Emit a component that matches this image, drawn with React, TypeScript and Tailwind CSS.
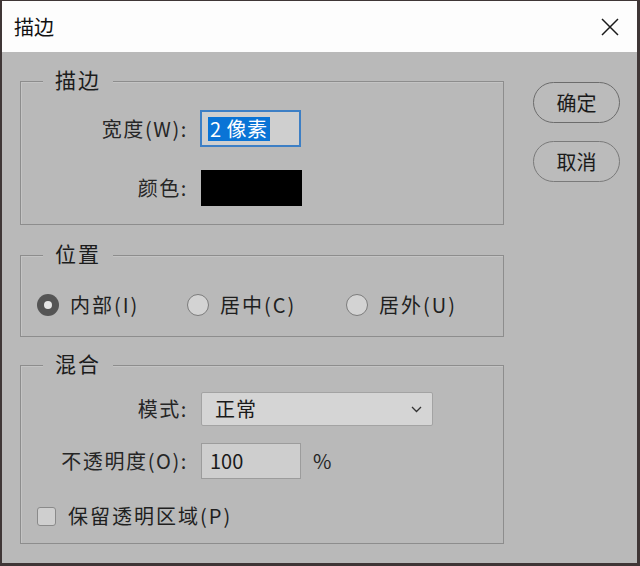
import React from "react";

function Group({ title, className, children }: { title: string; className: string; children: React.ReactNode }) {
  return (
    <div className={`relative border border-[#8d8d8d] shadow-[inset_1px_1px_0_#c4c4c4] ${className}`}>
      <span className="absolute left-[22px] -top-[17px] px-[12px] bg-[#b9b9b9] text-[21px] leading-[28px] tracking-[2px] text-[#1c1c1c]">
        {title}
      </span>
      {children}
    </div>
  );
}

function Radio({ checked, label, className }: { checked?: boolean; label: string; className: string }) {
  return (
    <div className={`flex items-center ${className}`}>
      {checked ? (
        <span className="w-[22px] h-[22px] rounded-full bg-[#555555] flex items-center justify-center">
          <span className="w-[8px] h-[8px] rounded-full bg-[#e6e6e6]" />
        </span>
      ) : (
        <span className="w-[22px] h-[22px] rounded-full border border-[#7c7c7c] bg-[#d3d3d3]" />
      )}
      <span className="ml-[11px] text-[20px] leading-[24px] tracking-[2px]">{label}</span>
    </div>
  );
}

export default function App() {
  return (
    <div className="w-[640px] h-[566px] flex flex-col border-t border-l-2 border-r-[3px] border-b-[3px] border-[#3f3636] bg-[#b9b9b9] font-['Noto_Sans_CJK_SC',sans-serif] text-[#1f1f1f]">
      <div className="h-[51px] shrink-0 bg-[#fdfdfd] flex items-center justify-between pl-[12px] pr-[18px]">
        <span className="text-[20px] leading-[28px] text-[#111]">描边</span>
        <svg width="18" height="18" viewBox="0 0 18 18" className="block">
          <path d="M1 1 L17 17 M17 1 L1 17" stroke="#1a1a1a" strokeWidth="1.5" fill="none" />
        </svg>
      </div>
      <div className="flex flex-1 pt-[29px] pl-[18px]">
        <div className="w-[484px] flex flex-col">
          <Group title="描边" className="h-[144px]">
            <div className="flex flex-col pt-[28px]">
              <div className="flex items-center h-[37px]">
                <span className="w-[167px] text-right text-[20px] leading-[28px] tracking-[1.6px] text-[#262626]">宽度(W):</span>
                <div className="ml-[12px] w-[101px] h-[37px] border-2 border-[#3d7fc5] bg-[#cfcfcf] pl-[6px] flex items-center">
                  <span className="bg-[#0a74d6] text-white text-[20px] leading-[24px] px-[2px] tracking-[0.5px]">2 像素</span>
                </div>
              </div>
              <div className="flex items-center h-[36px] mt-[23px]">
                <span className="w-[167px] text-right text-[20px] leading-[28px] tracking-[1.6px] text-[#262626]">颜色:</span>
                <div className="ml-[13px] w-[101px] h-[36px] bg-black" />
              </div>
            </div>
          </Group>
          <Group title="位置" className="h-[82px] mt-[30px]">
            <div className="flex items-center h-[24px] mt-[37px] pl-[16px]">
              <Radio checked label="内部(I)" className="w-[150px]" />
              <Radio label="居中(C)" className="w-[159px]" />
              <Radio label="居外(U)" className="" />
            </div>
          </Group>
          <Group title="混合" className="h-[179px] mt-[28px]">
            <div className="flex flex-col pt-[26px]">
              <div className="flex items-center h-[34px]">
                <span className="w-[167px] text-right text-[20px] leading-[28px] tracking-[1.6px] text-[#262626]">模式:</span>
                <div className="ml-[13px] w-[232px] h-[34px] rounded-[2px] border border-[#a3a3a3] bg-[#d5d5d5] pl-[13px] pr-[10px] flex items-center justify-between">
                  <span className="text-[20px] leading-[28px] tracking-[1px] text-[#1a1a1a]">正常</span>
                  <svg width="11" height="7" viewBox="0 0 11 7" className="block">
                    <path d="M1 1 L5.5 5.5 L10 1" stroke="#333" strokeWidth="1.3" fill="none" />
                  </svg>
                </div>
              </div>
              <div className="flex items-center h-[36px] mt-[17px]">
                <span className="w-[167px] text-right text-[20px] leading-[28px] tracking-[1.6px] text-[#262626]">不透明度(O):</span>
                <div className="ml-[13px] w-[100px] h-[36px] border border-[#9c9c9c] bg-[#cecece] pl-[8px] flex items-center">
                  <span className="text-[20px] leading-[28px] text-[#1a1a1a]">100</span>
                </div>
                <span className="ml-[12px] text-[20px] leading-[28px] text-[#262626]">%</span>
              </div>
              <div className="flex items-center h-[24px] mt-[25px] pl-[16px]">
                <span className="w-[19px] h-[19px] rounded-[3px] border border-[#8a8a8a] bg-[#cfcfcf]" />
                <span className="ml-[12px] text-[20px] leading-[24px] tracking-[2px]">保留透明区域(P)</span>
              </div>
            </div>
          </Group>
        </div>
        <div className="ml-[29px] pt-[1px] flex flex-col gap-[18px]">
          <button className="w-[87px] h-[41px] rounded-full border border-[#6c6c6c] bg-[#bbbbbb] text-[20px] leading-[28px] text-[#1a1a1a]">确定</button>
          <button className="w-[87px] h-[41px] rounded-full border border-[#7a7a7a] bg-[#bbbbbb] text-[20px] leading-[28px] text-[#1a1a1a]">取消</button>
        </div>
      </div>
    </div>
  );
}
